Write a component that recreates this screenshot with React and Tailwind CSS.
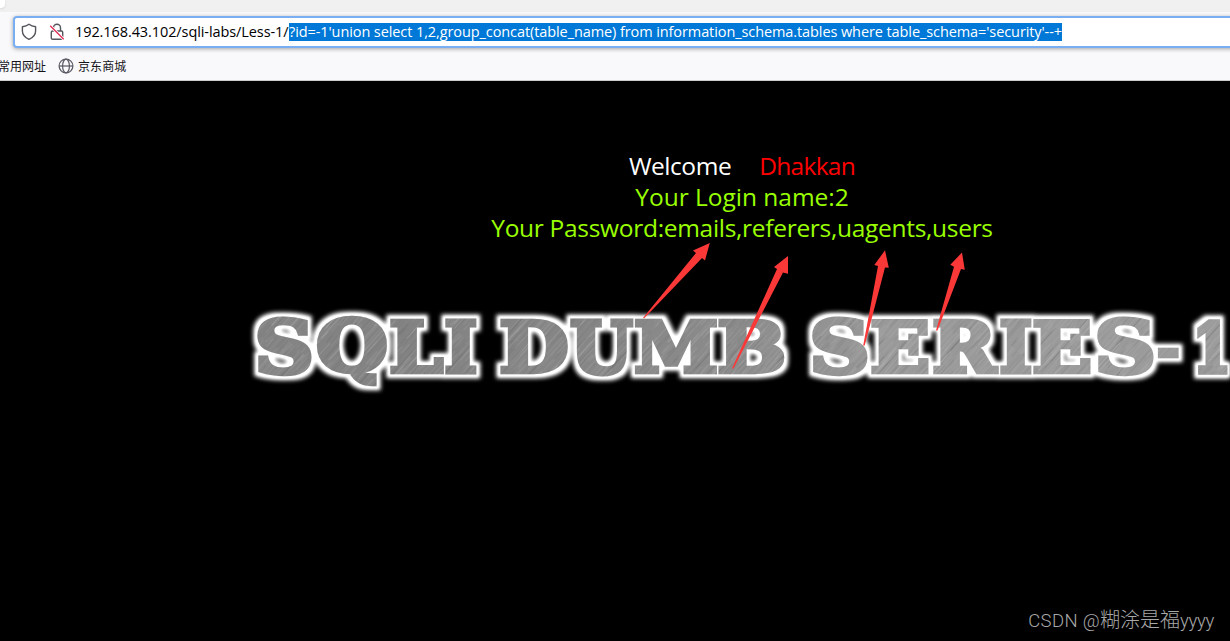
import React, { useMemo } from "react";

const UI = "font-['Open_Sans','Noto_Sans_CJK_SC',sans-serif]";

// [character, left edge, right edge, top edge, bottom edge] of each banner letter
const LETTERS = [
  ["S", 257, 312, 316, 376], ["Q", 317, 387, 316, 386], ["L", 390, 444.5, 319, 374], ["I", 445, 477, 319, 374],
  ["D", 500, 568, 319, 374], ["U", 570, 634, 319, 376], ["M", 635, 717, 319, 374], ["B", 718, 784, 319, 374],
  ["S", 812, 868, 316, 376], ["E", 871, 929, 319, 374], ["R", 933, 999, 319, 374], ["I", 1000, 1032, 319, 374],
  ["E", 1033, 1091, 319, 374], ["S", 1097, 1154, 316, 376], ["-", 1158, 1179, 348, 359], ["1", 1197, 1228, 319, 374],
];

const ARROWS = [
  "643,318 696,253 693,250.5 709.8,243 705,260.5 702,258 644.2,318.2",
  "732,368.5 777,269 774,267 788,256 788,273.7 783,272.5 733.5,368.5",
  "863.2,345.5 878,266 874.3,265 885,250.3 888.8,267.7 885,267.5 864.7,345.5",
  "936,330.5 954,266.7 950.3,264.7 962,252.5 964.8,269.8 961,269 937.5,330.5",
];

const BOLDNESS = 2.4;

function fitLetters() {
  const ctx = document.createElement("canvas").getContext("2d");
  ctx.font = "bold 100px 'DejaVu Serif'";
  return LETTERS.map(([ch, l, r, t, b]) => {
    const m = ctx.measureText(ch);
    const sx = (r - l - 2 * BOLDNESS) / (m.actualBoundingBoxRight + m.actualBoundingBoxLeft);
    const sy = (b - t - 2 * BOLDNESS) / (m.actualBoundingBoxAscent + m.actualBoundingBoxDescent);
    const x = l + BOLDNESS + m.actualBoundingBoxLeft * sx;
    const y = t + BOLDNESS - 81 + m.actualBoundingBoxAscent * sy;
    return { ch, transform: `translate(${x} ${y}) scale(${sx} ${sy})`, stroke: (2 * BOLDNESS) / ((sx + sy) / 2) };
  });
}

function brushStrokes() {
  let seed = 11;
  const rnd = () => ((seed = (seed * 16807) % 2147483647) / 2147483647);
  return Array.from({ length: 420 }, () => {
    const light = rnd() > 0.45;
    return { x: rnd() * 160 - 20, y: rnd() * 120, w: 8 + rnd() * 40, c: light ? "#d0d0d0" : "#505050", o: 0.06 + rnd() * 0.22 };
  });
}

function Banner() {
  const letters = useMemo(fitLetters, []);
  const strokes = useMemo(brushStrokes, []);
  return (
    <svg className="absolute inset-0" width="1230" height="560" viewBox="0 0 1230 560" fontFamily="'DejaVu Serif'" fontWeight="700" fontSize="100">
      <defs>
        <linearGradient id="shade" x1="250" x2="1230" y1="0" y2="0" gradientUnits="userSpaceOnUse">
          <stop offset="0" stopColor="#858585" />
          <stop offset="0.12" stopColor="#828282" />
          <stop offset="0.3" stopColor="#858585" />
          <stop offset="0.5" stopColor="#8b8b8b" />
          <stop offset="0.65" stopColor="#999" />
          <stop offset="1" stopColor="#9b9b9b" />
        </linearGradient>
        <pattern id="brush" width="120" height="120" patternUnits="userSpaceOnUse" patternTransform="rotate(-48)">
          {strokes.map((s, i) => (
            <rect key={i} x={s.x} y={s.y} width={s.w} height="0.7" fill={s.c} opacity={s.o} />
          ))}
        </pattern>
        <filter id="glow" x="230" y="215" width="1000" height="110" filterUnits="userSpaceOnUse">
          <feMorphology in="SourceAlpha" operator="dilate" radius="4" />
          <feGaussianBlur stdDeviation="1.9" />
          <feComponentTransfer result="halo"><feFuncA type="linear" slope="1.1" /></feComponentTransfer>
          <feFlood floodColor="#fff" />
          <feComposite in2="halo" operator="in" />
        </filter>
        <filter id="rim" x="230" y="215" width="1000" height="110" filterUnits="userSpaceOnUse">
          <feMorphology in="SourceAlpha" operator="dilate" radius="2" />
          <feGaussianBlur stdDeviation="0.9" result="soft" />
          <feFlood floodColor="#fff" />
          <feComposite in2="soft" operator="in" />
        </filter>
        <mask id="letters" x="230" y="215" width="1000" height="110" maskUnits="userSpaceOnUse">
          {letters.map((l, i) => <text key={i} transform={l.transform} fill="#fff" stroke="#fff" strokeWidth={l.stroke}>{l.ch}</text>)}
        </mask>
      </defs>
      <g filter="url(#glow)">
        {letters.map((l, i) => <text key={i} transform={l.transform} stroke="#000" strokeWidth={l.stroke}>{l.ch}</text>)}
      </g>
      <g filter="url(#rim)">
        {letters.map((l, i) => <text key={i} transform={l.transform} stroke="#000" strokeWidth={l.stroke}>{l.ch}</text>)}
      </g>
      <g mask="url(#letters)">
        <rect x="240" y="225" width="990" height="90" fill="url(#shade)" />
        <rect x="240" y="225" width="990" height="90" fill="url(#brush)" />
      </g>
      <g fill="#fb3838">
        {ARROWS.map((p) => <polygon key={p} points={p} transform="translate(0 -81)" />)}
      </g>
    </svg>
  );
}

function Shield() {
  return (
    <svg width="16" height="18" viewBox="0 0 16 18" fill="none" stroke="#55555c" strokeWidth="1.4" strokeLinejoin="round">
      <path d="M8 1.2C9.8 2.6 12 3.4 14.6 3.7V8c0 3.8-2.6 6.6-6.6 8.4C4 14.6 1.4 11.8 1.4 8V3.7C4 3.4 6.2 2.6 8 1.2Z" />
    </svg>
  );
}

function InsecureLock() {
  return (
    <svg width="16" height="18" viewBox="0 0 16 18" fill="none" stroke="#55555c" strokeWidth="1.4">
      <path d="M4.5 8V4.8a3.5 3.5 0 0 1 7 0V8" />
      <rect x="2.3" y="8" width="11.4" height="8.3" rx="1.3" />
      <path d="M1.2 2.8 14.7 16.3" stroke="#fff" strokeWidth="3" />
      <path d="M1.2 2.8 14.7 16.3" stroke="#e22850" strokeWidth="1.3" />
    </svg>
  );
}

function Globe() {
  return (
    <svg width="16" height="16" viewBox="0 0 16 16" fill="none" stroke="#5b5b66" strokeWidth="1.25">
      <circle cx="8" cy="8" r="6.9" />
      <ellipse cx="8" cy="8" rx="3.4" ry="6.9" />
      <path d="M1.1 8h13.8" />
    </svg>
  );
}

export default function App() {
  return (
    <div className={`flex h-[641px] w-[1230px] flex-col overflow-hidden bg-black ${UI}`}>
      <div className="h-3 shrink-0 bg-[#f0f0f0]">
        <div className="h-2 w-[5px] rounded-br bg-white shadow-sm" />
      </div>
      <div className="flex h-[69px] shrink-0 flex-col border-b border-[#cccccd] bg-[#f9f9fb] pt-1">
        <div className="ml-[13px] flex h-8 w-[1230px] shrink-0 items-center rounded-[4px] border-2 border-[#7aaef3] bg-white pl-1.5 shadow-[0_1px_4px_rgba(0,0,0,0.35)]">
          <Shield />
          <div className="ml-3"><InsecureLock /></div>
          <div className="ml-[10px] flex h-[18px] items-center whitespace-pre text-[14.5px] leading-[18px] text-black">
            <span className="w-[214px] tracking-[-0.09px]">192.168.43.102/sqli-labs/Less-1/</span>
            <span className="h-[18px] w-[773px] bg-[#0078d7] text-white tracking-[-0.09px]">?id=-1'union select 1,2,group_concat(table_name) from information_schema.tables where table_schema='security'--+</span>
          </div>
        </div>
        <div className="flex h-[32px] items-center whitespace-nowrap pt-1 font-['Noto_Sans_CJK_SC',sans-serif] text-[12px] text-[#15141a]">
          <span className="-ml-[2px] w-[60px]">常用网址</span>
          <Globe />
          <span className="ml-1 tracking-[0.1px]">京东商城</span>
        </div>
      </div>
      <div className="relative flex flex-1 flex-col pt-[69px]">
        <Banner />
        <div className="relative ml-[342px] flex w-[800px] flex-col items-center whitespace-pre text-[24.5px] leading-[31px] tracking-[-0.3px] text-[#99ff00]">
          <div className="flex gap-[28px]">
            <span className="tracking-[-0.45px] text-white">Welcome</span>
            <span className="tracking-[-0.7px] text-[#ff0000]">Dhakkan</span>
          </div>
          <div className="tracking-[-0.02px]">Your Login name:2</div>
          <div>Your Password:emails,referers,uagents,users</div>
        </div>
        <div className="mt-auto flex items-baseline justify-end whitespace-pre pb-[5px] pr-[16px] font-['Roboto','Noto_Sans_CJK_SC',sans-serif] text-[18.5px] font-light leading-[30px] text-[#a8a8a8]">
          <span className="tracking-[0.35px]">CSDN @</span>
          <span className="text-[20px]">糊涂是福</span>
          <span className="tracking-[-0.3px]">yyyy</span>
        </div>
      </div>
    </div>
  );
}
